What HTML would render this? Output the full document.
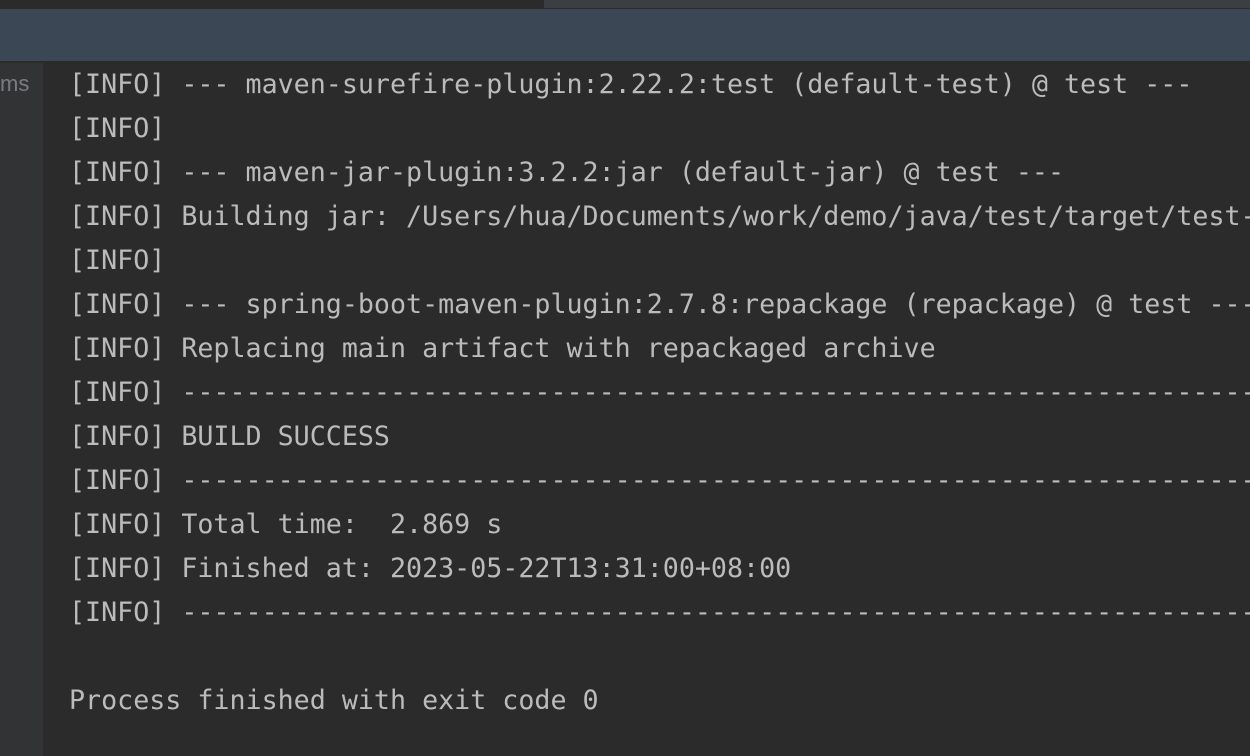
<!DOCTYPE html>
<html><head><style>
html,body{margin:0;width:1250px;height:756px;overflow:hidden}
body{background:#2b2b2b;position:relative;font-family:"Liberation Mono",monospace}
.t1{position:absolute;left:0;top:0;width:544px;height:8px;background:#2b2b2b}
.t2{position:absolute;left:544px;top:0;width:706px;height:8px;background:#3c3f41}
.blue{position:absolute;left:0;top:9px;width:1250px;height:52px;background:#3b4754}
.g{position:absolute;left:0;top:63px;width:43px;height:693px;background:#313335}
.ms{position:absolute;left:0;top:71px;font-family:"Liberation Sans",sans-serif;font-size:22px;color:#7a7d80}
pre{position:absolute;left:69px;top:63px;width:1181px;overflow:hidden;margin:0;font-size:26.67px;line-height:44px;color:#bbbbbb;white-space:pre}
</style></head><body>
<div class="t1"></div><div class="t2"></div><div class="blue"></div><div class="g"></div>
<div class="ms">ms</div>
<pre>[INFO] --- maven-surefire-plugin:2.22.2:test (default-test) @ test ---
[INFO]
[INFO] --- maven-jar-plugin:3.2.2:jar (default-jar) @ test ---
[INFO] Building jar: /Users/hua/Documents/work/demo/java/test/target/test-0.0.1-SNAPSHOT.jar
[INFO]
[INFO] --- spring-boot-maven-plugin:2.7.8:repackage (repackage) @ test ---
[INFO] Replacing main artifact with repackaged archive
[INFO] ------------------------------------------------------------------------
[INFO] BUILD SUCCESS
[INFO] ------------------------------------------------------------------------
[INFO] Total time:  2.869 s
[INFO] Finished at: 2023-05-22T13:31:00+08:00
[INFO] ------------------------------------------------------------------------

Process finished with exit code 0</pre>
</body></html>
